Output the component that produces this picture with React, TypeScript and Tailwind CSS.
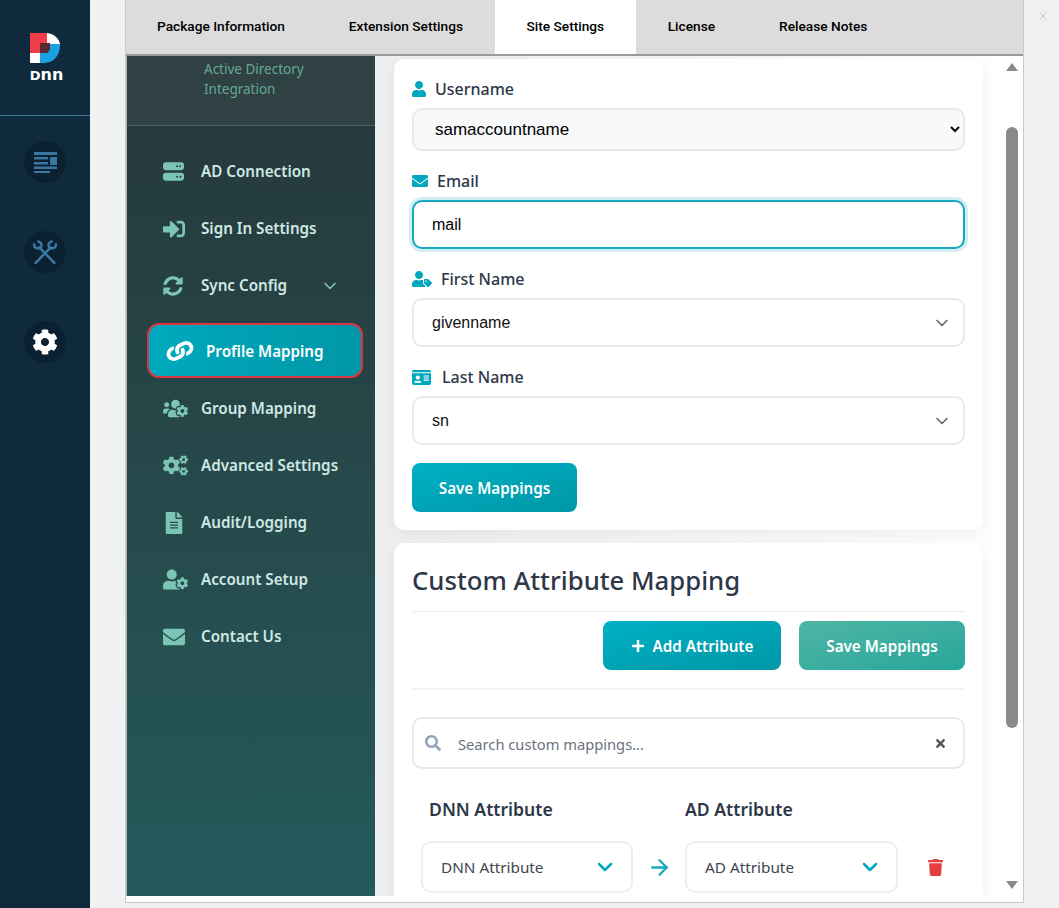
import type { ReactNode } from "react";
import { ArrowRight, ChevronDown, X } from "lucide-react";
import {
  FaCog,
  FaCogs,
  FaEnvelope,
  FaFileAlt,
  FaIdCard,
  FaLink,
  FaPlus,
  FaSearch,
  FaSignInAlt,
  FaSyncAlt,
  FaTimes,
  FaTrash,
  FaUser,
  FaUserCog,
  FaUsersCog,
  FaUserTag,
} from "react-icons/fa";
import { FaServer } from "react-icons/fa6";

const ui = "font-['Noto_Sans',sans-serif]";
const arial = "font-['Liberation_Sans',sans-serif]";

const tabs = ["Package Information", "Extension Settings", "Site Settings", "License", "Release Notes"];

const menuTop = [
  { icon: FaServer, size: 21, label: "AD Connection" },
  { icon: FaSignInAlt, size: 22, label: "Sign In Settings" },
  { icon: FaSyncAlt, size: 20, label: "Sync Config", caret: true },
];

const menuBottom = [
  { icon: FaUsersCog, size: 25, label: "Group Mapping" },
  { icon: FaCogs, size: 25, label: "Advanced Settings" },
  { icon: FaFileAlt, size: 22, label: "Audit/Logging" },
  { icon: FaUserCog, size: 25, label: "Account Setup" },
  { icon: FaEnvelope, size: 22, label: "Contact Us" },
];

function Rail() {
  return (
    <aside className="flex w-[90px] shrink-0 flex-col items-center bg-[#0f2a3c]">
      <div className="flex h-[116px] w-full flex-col items-center border-b border-[#3f7a96] pt-[33px]">
        <svg width="30" height="30" viewBox="0 0 30 30">
          <path d="M0 0H17V10H10V20H0Z" fill="#ef3e4a" />
          <path d="M17 0C24 1 29 5 30 11H17Z" fill="#ffffff" />
          <path d="M10 10H20V14C20 18 17 20 15 20H10Z" fill="#5a2a30" />
          <path d="M0 20H10V30H0Z" fill="#ffffff" />
          <path d="M20 11H30C30.5 22 24 30 14 30H10V20H15C18 20 20 18 20 14Z" fill="#1ba1e2" />
        </svg>
        <div className="ml-[3px] mt-[5px] flex items-baseline font-['DejaVu_Sans',sans-serif] font-bold leading-[14px] text-white">
          <span className="text-[13px]">D</span>
          <span className="text-[16px]">nn</span>
        </div>
      </div>
      <RailButton className="mt-[25px]">
        <svg width="23" height="21" viewBox="0 0 23 21" fill="#3a77a3">
          <rect x="0" y="0" width="23" height="3" />
          <rect x="0" y="5" width="14" height="2.5" />
          <rect x="16" y="5" width="7" height="8" />
          <rect x="0" y="10" width="14" height="2.5" />
          <rect x="0" y="14.5" width="23" height="2.5" />
          <rect x="0" y="19" width="16" height="2" />
        </svg>
      </RailButton>
      <RailButton className="mt-[48px]">
        <svg width="26" height="25" viewBox="0 0 25 24" fill="none" stroke="#3a77a3" strokeWidth="2.4" strokeLinecap="round">
          <path d="M7 7L21.5 22" />
          <path d="M18 7L3.5 22" />
          <path d="M2 4C2 8 6 9 8.5 7C10 5 9 2 6 1.5" />
          <path d="M23 4C23 8 19 9 16.5 7C15 5 16 2 19 1.5" />
        </svg>
      </RailButton>
      <RailButton className="mt-[48px]">
        <FaCog size={26} color="#ffffff" />
      </RailButton>
    </aside>
  );
}

function RailButton({ className, children }: { className: string; children: ReactNode }) {
  return (
    <div className={`flex h-[42px] w-[42px] items-center justify-center rounded-full bg-[#0b2131] ${className}`}>
      {children}
    </div>
  );
}

function Sidebar() {
  return (
    <nav className={`flex w-[248px] shrink-0 flex-col bg-gradient-to-b from-[#253739] to-[#245a5c] ${ui}`}>
      <div className="h-[70px] shrink-0 border-b border-[#4a6463] bg-[#2f4142] pl-[77px] pt-[3px] text-[13.5px] leading-[20px] text-[#66a898]">
        Active Directory
        <br />
        Integration
      </div>
      <ul className="mt-[17px] flex flex-col">
        {menuTop.map((m) => (
          <MenuRow key={m.label} {...m} />
        ))}
        <li className="mx-[20px] mb-[2px] mt-[9px] flex h-[55px] w-[216px] items-center rounded-[12px] border-[2px] border-[#dc3545] bg-gradient-to-r from-[#00a9bd] to-[#0097a7] pl-[19px] text-[15.2px] font-semibold text-white">
          <FaLink size={24} className="rotate-[20deg]" />
          <span className="ml-[14px] pt-[2px]">Profile Mapping</span>
        </li>
        {menuBottom.map((m) => (
          <MenuRow key={m.label} {...m} />
        ))}
      </ul>
    </nav>
  );
}

function MenuRow({
  icon: Icon,
  size,
  label,
  caret,
}: {
  icon: typeof FaCog;
  size: number;
  label: string;
  caret?: boolean;
}) {
  return (
    <li className="flex h-[57px] items-center pl-[36px] text-[15.2px] font-semibold text-[#cfe8e4]">
      <span className="flex w-[38px] shrink-0 text-[#7cc5b5]">
        <Icon size={size} />
      </span>
      <span>{label}</span>
      {caret && <ChevronDown size={20} className="ml-[33px] text-[#7cc5b5]" />}
    </li>
  );
}

function Label({ icon: Icon, gap, size, children }: { icon: typeof FaUser; gap: string; size: number; children: ReactNode }) {
  return (
    <div className={`flex h-[20px] items-center text-[16px] font-medium text-[#2d3748] ${gap}`}>
      <span className="text-[#00a8bd]">
        <Icon size={size} />
      </span>
      {children}
    </div>
  );
}

function FakeSelect({ value, className }: { value: string; className: string }) {
  return (
    <div className={`flex items-center justify-between rounded-[10px] border-[2px] border-[#e7e9eb] bg-white pl-[18px] pr-[11px] text-[#111] ${arial} text-[16px] ${className}`}>
      {value}
      <ChevronDown size={20} className="text-[#666]" strokeWidth={2} />
    </div>
  );
}

function AttributeSelect({ value, className }: { value: string; className: string }) {
  return (
    <div className={`flex h-[52px] items-center justify-between rounded-[10px] border-[2px] border-[#eceef0] bg-white pl-[18px] pr-[14px] text-[15.3px] text-[#3f4650] ${className}`}>
      {value}
      <ChevronDown size={24} strokeWidth={2.5} className="text-[#00a8bd]" />
    </div>
  );
}

function Scrollbar() {
  return (
    <div className="flex w-[20px] shrink-0 flex-col items-center pt-[7px]">
      <div className="h-0 w-0 border-x-[6px] border-b-[8px] border-x-transparent border-b-[#8a8a8a]" />
      <div className="mt-[56px] h-[601px] w-[12px] rounded-full bg-[#8a8a8a]" />
      <div className="mt-[153px] h-0 w-0 border-x-[6px] border-t-[8px] border-x-transparent border-t-[#8a8a8a]" />
    </div>
  );
}

function Main() {
  return (
    <main className={`flex min-w-0 flex-1 bg-gradient-to-r from-[#eceef0] to-white ${ui}`}>
      <div className="ml-[19px] mt-[3px] w-[589px] shrink-0">
        <section className="flex h-[471px] flex-col rounded-[10px] bg-white px-[18px] pt-[20px] shadow-[0_4px_14px_rgba(0,0,0,0.06)]">
          <Label icon={FaUser} gap="-ml-[1px] gap-[8px]" size={16}>
            Username
          </Label>
          <select
            defaultValue="samaccountname"
            className={`mt-[9px] h-[43px] w-[553px] rounded-[10px] border-[2px] border-[#e7e9eb] bg-[#f8f9fb] pl-[17px] pr-[2px] text-[17px] text-black ${arial}`}
          >
            <option>samaccountname</option>
          </select>
          <div className="mt-[20px]">
            <Label icon={FaEnvelope} gap="gap-[9px]" size={16}>
              Email
            </Label>
          </div>
          <input
            readOnly
            value="mail"
            className={`mt-[9px] h-[49px] w-[553px] rounded-[10px] border-[2px] border-[#17a9bf] bg-white px-[18px] text-[16px] text-black shadow-[0_0_0_3px_rgba(0,168,189,0.18)] outline-none ${arial}`}
          />
          <div className="mt-[20px]">
            <Label icon={FaUserTag} gap="gap-[9px]" size={20}>
              First Name
            </Label>
          </div>
          <FakeSelect value="givenname" className="mt-[9px] h-[49px] w-[553px]" />
          <div className="mt-[20px]">
            <Label icon={FaIdCard} gap="gap-[11px]" size={19}>
              Last Name
            </Label>
          </div>
          <FakeSelect value="sn" className="mt-[9px] h-[49px] w-[553px]" />
          <button className="mt-[18px] h-[49px] w-[165px] rounded-[8px] bg-gradient-to-br from-[#00b0c4] to-[#0097a7] pt-[1px] text-[15.2px] font-semibold text-white">
            Save Mappings
          </button>
        </section>
        <section className="mt-[13px] h-[353px] overflow-hidden rounded-t-[10px] bg-white px-[18px] pt-[20px] shadow-[0_4px_14px_rgba(0,0,0,0.06)]">
          <h2 className="h-[49px] border-b border-[#e9ebed] text-[25.7px] font-medium leading-[36px] text-[#2d3748]">
            Custom Attribute Mapping
          </h2>
          <div className="flex justify-end gap-[18px] pt-[9px]">
            <button className="flex h-[49px] w-[178px] items-center justify-center gap-[8px] rounded-[8px] bg-gradient-to-br from-[#00b0c4] to-[#0097a7] pt-[1px] text-[15.2px] font-semibold text-white">
              <FaPlus size={14} />
              Add Attribute
            </button>
            <button className="h-[49px] w-[166px] rounded-[8px] bg-gradient-to-br from-[#4db6a5] to-[#26a69a] pt-[1px] text-[15.2px] font-semibold text-white">
              Save Mappings
            </button>
          </div>
          <div className="mt-[18px] border-t-[2px] border-[#f1f2f3]" />
          <div className="mt-[27px] flex h-[52px] items-center rounded-[10px] border-[2px] border-[#e7e9eb] pl-[11px] pr-[16px]">
            <FaSearch size={16} className="text-[#94a3b8]" />
            <span className="ml-[17px] flex-1 pt-[3px] text-[14.7px] text-[#6b7280]">Search custom mappings...</span>
            <FaTimes size={13} className="text-[#555]" />
          </div>
          <div className="mt-[27px] flex text-[17.6px] font-semibold leading-[26px] text-[#2d3748]">
            <span className="ml-[17px] w-[256px]">DNN Attribute</span>
            <span>AD Attribute</span>
          </div>
          <div className="mt-[19px] flex items-center pl-[9px]">
            <AttributeSelect value="DNN Attribute" className="w-[212px]" />
            <ArrowRight size={25} strokeWidth={2.2} className="ml-[14px] text-[#17a9bf]" />
            <AttributeSelect value="AD Attribute" className="ml-[13px] w-[213px]" />
            <FaTrash size={17} className="ml-[29px] text-[#e53e3e]" />
          </div>
        </section>
      </div>
      <div className="ml-[19px]">
        <Scrollbar />
      </div>
    </main>
  );
}

export default function App() {
  return (
    <div className="flex h-[908px] w-[1059px] overflow-hidden bg-[#f0f1f2]">
      <Rail />
      <div className="ml-[35px] flex h-[903px] w-[899px] shrink-0 flex-col border-x border-b border-[#c9c9c9] bg-white">
        <div className="flex h-[56px] shrink-0 border-b-[2px] border-[#9a9a9a] bg-[#dcdcdc] font-['Roboto',sans-serif] text-[13.7px] font-medium text-black">
          {tabs.map((t, i) => (
            <div
              key={t}
              className={
                t === "Site Settings"
                  ? "flex items-center bg-white px-[31.5px] pb-[2px]"
                  : i === 0
                    ? "flex items-center pb-[2px] pl-[31px] pr-[32px]"
                    : "flex items-center px-[32px] pb-[2px]"
              }
            >
              {t}
            </div>
          ))}
        </div>
        <div className="flex h-[840px] shrink-0 overflow-hidden border-l-[1px] border-[#b5b5b5]">
          <Sidebar />
          <Main />
        </div>
      </div>
      <div className="flex flex-1 justify-center pl-[3px] pt-[9px]">
        <X size={14} strokeWidth={1} className="text-[#a8a8a8]" />
      </div>
    </div>
  );
}
